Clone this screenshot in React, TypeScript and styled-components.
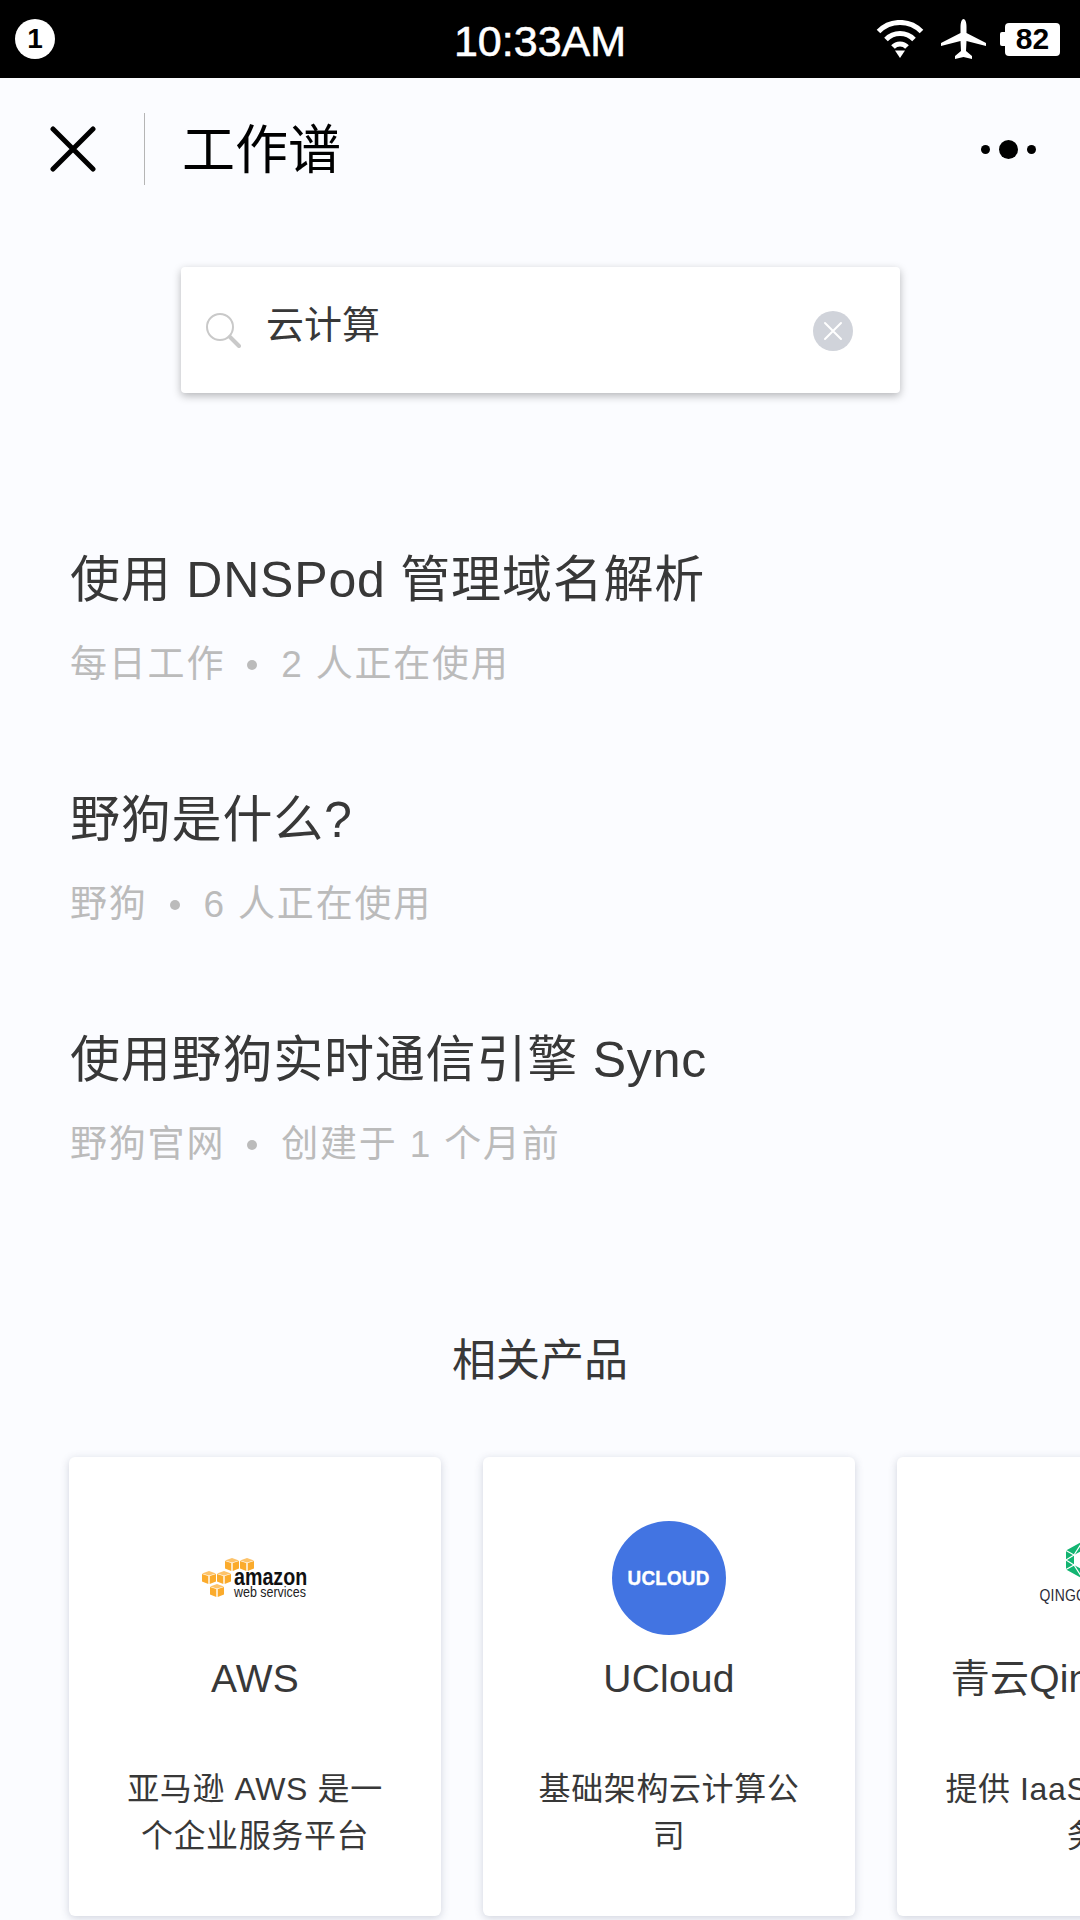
import * as React from 'react';
import styled, { createGlobalStyle } from 'styled-components';

const GlobalStyle = createGlobalStyle`
  html, body {
    margin: 0;
    padding: 0;
    background: #fbfcff;
  }
  * {
    box-sizing: border-box;
  }
`;

const results = [
  { title: '使用 DNSPod 管理域名解析', source: '每日工作', info: '2 人正在使用' },
  { title: '野狗是什么?', source: '野狗', info: '6 人正在使用' },
  { title: '使用野狗实时通信引擎 Sync', source: '野狗官网', info: '创建于 1 个月前' },
];

const Cube: React.FC<{ x: number; y: number }> = ({ x, y }) => (
  <g transform={`translate(${x} ${y})`}>
    <polygon points="0,2.5 7,0 14,2.5 7,4.5" fill="#fdc36a" />
    <polygon points="0,3 6.3,5 6.3,13 0,10.5" fill="#fbab2c" />
    <polygon points="14,3 7.7,5 7.7,13 14,10.5" fill="#fbab2c" />
  </g>
);

const AwsLogo = () => (
  <svg width="106" height="42" viewBox="0 0 106 42">
    <Cube x={23} y={1} />
    <Cube x={38} y={1} />
    <Cube x={0} y={14} />
    <Cube x={15} y={14} />
    <Cube x={8} y={27} />
    <text transform="translate(32 28) scale(0.82 1)" fontFamily="Liberation Sans" fontWeight="700" fontSize="24" fill="#111">amazon</text>
    <text transform="translate(32 40) scale(0.83 1)" fontFamily="Liberation Sans" fontSize="15" fill="#222">web services</text>
  </svg>
);

const QingLogo = () => (
  <QingWrap>
    <svg width="36" height="38" viewBox="0 0 36 38">
      <polygon points="18,0 35,9.5 35,28.5 18,38 1,28.5 1,9.5 18,0 18,9 9,14 9,24 18,29 27,24 27,14 18,9" fill="#12b471" fillRule="evenodd" />
      <path d="M1 9.5 L9 14 M1 19 L9 14 M1 19 L9 24 M1 28.5 L9 24 M18 0 L9 14 M18 38 L9 24 M35 9.5 L27 14 M35 19 L27 14 M35 19 L27 24 M35 28.5 L27 24 M18 0 L27 14 M18 38 L27 24" stroke="#fff" strokeWidth="1.2" />
    </svg>
    <QingText>QINGCLOUD</QingText>
  </QingWrap>
);

function UcloudBadgeLogo() {
  return (
    <UcloudBadge>
      <UcloudText>UCLOUD</UcloudText>
    </UcloudBadge>
  );
}

const products = [
  { name: 'AWS', desc: '亚马逊 AWS 是一个企业服务平台', logo: <AwsLogo /> },
  { name: 'UCloud', desc: '基础架构云计算公司', logo: <UcloudBadgeLogo /> },
  { name: '青云QingCloud', desc: '提供 IaaS PaaS 服务', logo: <QingLogo /> },
];

const App: React.FC = () => {
  return (
    <Page>
      <GlobalStyle />
      <StatusBar>
        <StatusLeft>
          <Badge>1</Badge>
        </StatusLeft>
        <Clock>10:33AM</Clock>
        <StatusRight>
          <svg width="48" height="38" viewBox="0 0 48 38" fill="none" stroke="#fff" strokeWidth="5">
            <path d="M2.5 11.5 A30 30 0 0 1 45.5 11.5" />
            <path d="M10 19.5 A19.5 19.5 0 0 1 38 19.5" />
            <path d="M17 27 A9.5 9.5 0 0 1 31 27" />
            <polygon points="24,38 19,30.5 29,30.5" fill="#fff" stroke="none" />
          </svg>
          <svg width="45" height="40" viewBox="0 0 45 40" fill="#fff">
            <path d="M22.5 0 C24.5 0 25.5 4 25.5 8 L25.5 14 L45 24 L45 27 L25.5 22 L25 32 L31 37 L31 40 L22.5 38 L14 40 L14 37 L20 32 L19.5 22 L0 27 L0 24 L19.5 14 L19.5 8 C19.5 4 20.5 0 22.5 0 Z" />
          </svg>
          <Battery>
            <BatteryNub />
            <BatteryBody>82</BatteryBody>
          </Battery>
        </StatusRight>
      </StatusBar>

      <Nav>
        <CloseBtn>
          <svg width="46" height="46" viewBox="0 0 46 46" stroke="#000" strokeWidth="5" strokeLinecap="round">
            <path d="M3 3 L43 43 M43 3 L3 43" />
          </svg>
        </CloseBtn>
        <NavDivider />
        <NavTitle>工作谱</NavTitle>
        <MoreDots>
          <Dot size={9} />
          <Dot size={19} />
          <Dot size={9} />
        </MoreDots>
      </Nav>

      <SearchBox>
        <svg width="36" height="36" viewBox="0 0 36 36" fill="none" stroke="#c9c9c9">
          <circle cx="15" cy="15" r="13" strokeWidth="2" />
          <path d="M25 25 L34 34" strokeWidth="4" strokeLinecap="round" />
        </svg>
        <SearchText>云计算</SearchText>
        <ClearBtn>
          <svg width="20" height="20" viewBox="0 0 20 20" stroke="#fff" strokeWidth="2" strokeLinecap="round">
            <path d="M2 2 L18 18 M18 2 L2 18" />
          </svg>
        </ClearBtn>
      </SearchBox>

      <ResultList>
        {results.map((r) => (
          <ResultItem key={r.title}>
            <ResultTitle>{r.title}</ResultTitle>
            <ResultMeta>
              {r.source}
              <MetaDot />
              {r.info}
            </ResultMeta>
          </ResultItem>
        ))}
      </ResultList>

      <SectionTitle>相关产品</SectionTitle>
      <CardRow>
        {products.map((p) => (
          <Card key={p.name}>
            <LogoArea>{p.logo}</LogoArea>
            <CardName>{p.name}</CardName>
            <CardDesc>{p.desc}</CardDesc>
          </Card>
        ))}
      </CardRow>
    </Page>
  );
};

const Page = styled.div`
  width: 1080px;
  height: 1920px;
  overflow: hidden;
  background: #fbfcff;
  color: #383838;
  font-family: 'Liberation Sans', 'Noto Sans CJK SC', sans-serif;
`;

const StatusBar = styled.div`
  height: 78px;
  background: #000;
  color: #fff;
  display: grid;
  grid-template-columns: 1fr auto 1fr;
  align-items: center;
  padding: 0 20px;
`;

const StatusLeft = styled.div`
  display: flex;
  align-items: center;
`;

const Badge = styled.div`
  width: 40px;
  height: 40px;
  margin-left: -5px;
  border-radius: 50%;
  background: #fff;
  color: #000;
  font-size: 28px;
  font-weight: 700;
  display: flex;
  align-items: center;
  justify-content: center;
`;

const Clock = styled.div`
  font-size: 43px;
  line-height: 46px;
  padding-top: 3px;
  -webkit-text-stroke: 0.6px #fff;
`;

const StatusRight = styled.div`
  display: flex;
  align-items: center;
  justify-content: flex-end;
  gap: 17px;
`;

const Battery = styled.div`
  display: flex;
  align-items: center;
  margin-left: -3px;
`;

const BatteryNub = styled.div`
  width: 5px;
  height: 14px;
  background: #fff;
  border-radius: 2px 0 0 2px;
`;

const BatteryBody = styled.div`
  width: 55px;
  height: 33px;
  background: #fff;
  border-radius: 4px;
  color: #000;
  font-size: 30px;
  font-weight: 700;
  display: flex;
  align-items: center;
  justify-content: center;
`;

const Nav = styled.div`
  height: 142px;
  display: flex;
  align-items: center;
  padding: 0 44px 0 50px;
`;

const CloseBtn = styled.div`
  width: 46px;
  height: 46px;
`;

const NavDivider = styled.div`
  width: 1px;
  height: 72px;
  background: #b5b5b5;
  margin: 0 37px 0 48px;
`;

const NavTitle = styled.div`
  font-size: 53px;
  line-height: 64px;
  margin-top: 4px;
  color: #000;
  flex: 1;
`;

const MoreDots = styled.div`
  display: flex;
  align-items: center;
  gap: 9px;
`;

const Dot = styled.div<{ size: number }>`
  width: ${(p) => p.size}px;
  height: ${(p) => p.size}px;
  border-radius: 50%;
  background: #000;
`;

const SearchBox = styled.div`
  width: 719px;
  height: 126px;
  margin: 47px 0 0 181px;
  padding: 0 47px 0 24px;
  background: #fff;
  border-radius: 4px;
  box-shadow: 0 3px 8px rgba(0, 0, 0, 0.28);
  display: flex;
  align-items: center;
`;

const SearchText = styled.div`
  flex: 1;
  font-size: 38px;
  line-height: 50px;
  color: #383838;
  margin: -10px 0 0 25px;
`;

const ClearBtn = styled.div`
  width: 40px;
  height: 40px;
  margin-top: 2px;
  border-radius: 50%;
  background: #d0d3da;
  display: flex;
  align-items: center;
  justify-content: center;
`;

const ResultList = styled.div`
  margin-top: 155px;
  padding-left: 70px;
  display: flex;
  flex-direction: column;
  gap: 98px;
`;

const ResultItem = styled.div`
  display: flex;
  flex-direction: column;
  gap: 28px;
`;

const ResultTitle = styled.div`
  font-size: 50px;
  line-height: 64px;
  letter-spacing: 0.8px;
  color: #383838;
`;

const ResultMeta = styled.div`
  display: flex;
  align-items: center;
  font-size: 37px;
  line-height: 50px;
  letter-spacing: 1.8px;
  color: #bbb;
`;

const MetaDot = styled.span`
  width: 10px;
  height: 10px;
  border-radius: 50%;
  background: #bbb;
  margin: 0 24px 0 22px;
`;

const SectionTitle = styled.div`
  margin-top: 161px;
  font-size: 44px;
  line-height: 60px;
  text-align: center;
  color: #383838;
`;

const CardRow = styled.div`
  margin-top: 56px;
  padding: 10px 0 10px 69px;
  display: flex;
  gap: 42px;
  overflow: hidden;
`;

const Card = styled.div`
  flex: 0 0 372px;
  height: 459px;
  padding: 64px 45px 0;
  background: #fff;
  border-radius: 6px;
  box-shadow: 0 2px 8px rgba(60, 70, 100, 0.22);
  display: flex;
  flex-direction: column;
  align-items: center;
  text-align: center;
`;

const LogoArea = styled.div`
  height: 114px;
  display: flex;
  align-items: center;
  justify-content: center;
`;

const UcloudBadge = styled.div`
  width: 114px;
  height: 114px;
  border-radius: 50%;
  background: #4274e2;
  display: flex;
  align-items: center;
  justify-content: center;
`;

const UcloudText = styled.span`
  color: #fff;
  font-size: 21px;
  font-weight: 700;
  letter-spacing: 0.2px;
  transform: scaleX(0.9);
  -webkit-text-stroke: 0.4px #fff;
`;

const QingWrap = styled.div`
  display: flex;
  flex-direction: column;
  align-items: center;
  gap: 8px;
  margin-top: -10px;
`;

const QingText = styled.div`
  font-size: 17px;
  line-height: 18px;
  letter-spacing: 0.3px;
  color: #2b2b38;
  white-space: nowrap;
  transform: scaleX(0.82);
`;

const CardName = styled.div`
  margin-top: 19px;
  font-size: 39px;
  line-height: 50px;
  letter-spacing: 0.2px;
  color: #383838;
  white-space: nowrap;
`;

const CardDesc = styled.div`
  margin-top: 62px;
  font-size: 32px;
  line-height: 47px;
  letter-spacing: 0.6px;
  color: #383838;
`;

export default App;
